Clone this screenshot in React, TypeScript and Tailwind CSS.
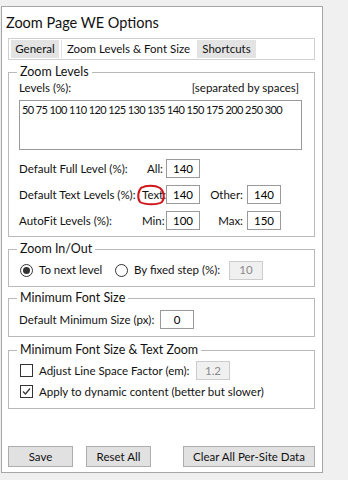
import React from "react";

const font = "font-['Lato','Noto_Sans','DejaVu_Sans',sans-serif]";

function Box({ value, w = "w-[34px]", disabled = false }: { value: string; w?: string; disabled?: boolean }) {
  return (
    <div
      className={`flex h-[19px] ${w} shrink-0 items-center justify-center border ${
        disabled ? "border-[#cccccc] bg-[#f0f0f0] text-[#8a8a8a]" : "border-[#9a9a9a] bg-white text-black"
      }`}
    >
      {value}
    </div>
  );
}

function Group({ title, className, children }: { title: string; className?: string; children: React.ReactNode }) {
  return (
    <fieldset className={`w-[307px] border border-[#b9b9b9] pl-[10px] pr-[11px] ${className ?? ""}`}>
      <legend className="-ml-[2px] px-[3px] text-[12.5px] leading-[14px]">{title}</legend>
      {children}
    </fieldset>
  );
}

function Radio({ checked }: { checked?: boolean }) {
  return (
    <span className="flex h-[13px] w-[13px] shrink-0 items-center justify-center rounded-full border border-[#333333] bg-white">
      {checked && <span className="h-[7px] w-[7px] rounded-full bg-[#333333]" />}
    </span>
  );
}

function Check({ checked }: { checked?: boolean }) {
  return (
    <span className="flex h-[13px] w-[13px] shrink-0 items-center justify-center border border-[#333333] bg-white">
      {checked && (
        <svg width="9" height="9" viewBox="0 0 9 9">
          <path d="M1 4.5 L3.5 7 L8 1.5" fill="none" stroke="#333333" strokeWidth="1.2" />
        </svg>
      )}
    </span>
  );
}

function Row({ label, a, av, b, bv }: { label: React.ReactNode; a: React.ReactNode; av: string; b?: string; bv?: string }) {
  return (
    <div className="flex h-[19px] items-center whitespace-nowrap">
      <span className="w-[123px]">{label}</span>
      <span className="mr-[3px] w-[21px] text-right">{a}</span>
      <Box value={av} />
      {b && (
        <>
          <span className="mr-[4px] w-[43px] text-right">{b}</span>
          <Box value={bv ?? ""} />
        </>
      )}
    </div>
  );
}

export default function App() {
  return (
    <div className={`h-[480px] w-[348px] bg-[#f0f0f0] pl-px pt-[6px] text-[11.5px] text-[#111111] ${font}`}>
      <div className="flex h-[467px] w-[322px] flex-col whitespace-nowrap border border-[#a6a6a6] bg-white px-[6px] pt-[6px]">
        <h1 className="-ml-[2px] text-[14.5px] leading-[20px]">Zoom Page WE Options</h1>

        <div className="mt-[5px] flex h-[22px] w-[307px] items-center gap-[2px] border border-[#d0d0d0] px-[2px]">
          <span className="flex h-[18px] w-[48px] items-center justify-center bg-[#e3e3e3]">General</span>
          <span className="flex h-[18px] w-[134px] items-center justify-center border-l border-[#e3e3e3] bg-white">
            Zoom Levels &amp; Font Size
          </span>
          <span className="flex h-[18px] w-[59px] items-center justify-center bg-[#e3e3e3]">Shortcuts</span>
        </div>

        <Group title="Zoom Levels" className="mt-[5px] pb-[6px]">
          <div className="mt-px flex h-[16px] items-center justify-between pr-[4px]">
            <span>Levels (%):</span>
            <span>[separated by spaces]</span>
          </div>
          <div className="mt-[4px] h-[50px] w-[283px] border border-[#9a9a9a] px-[2px] pt-[2px] text-[11px] leading-[14px] tracking-[-0.6px]">
            50 75 100 110 120 125 130 135 140 150 175 200 250 300
          </div>
          <div className="mt-[9px] flex flex-col gap-[7px]">
            <Row label="Default Full Level (%):" a="All:" av="140" />
            <Row
              label="Default Text Levels (%):"
              a={
                <span className="relative">
                  Text:
                  <svg className="absolute -left-[6px] -top-[4px]" width="32" height="22" viewBox="0 0 32 22">
                    <path
                      d="M6 3 C2 6 1 14 4 18 C9 21 22 21 26 18 C29 14 28 7 24 4 C19 1 10 1 5 4"
                      fill="none"
                      stroke="#d0161b"
                      strokeWidth="2"
                    />
                  </svg>
                </span>
              }
              av="140"
              b="Other:"
              bv="140"
            />
            <Row label="AutoFit Levels (%):" a="Min:" av="100" b="Max:" bv="150" />
          </div>
        </Group>

        <Group title="Zoom In/Out" className="mt-[5px] pb-[6px]">
          <div className="mt-[4px] flex h-[20px] items-center">
            <span className="ml-px mr-[6px]">
              <Radio checked />
            </span>
            <span className="w-[76px]">To next level</span>
            <Radio />
            <span className="ml-[6px] w-[95px]">By fixed step (%):</span>
            <Box value="10" disabled />
          </div>
        </Group>

        <Group title="Minimum Font Size" className="mt-[4px] pb-[7px]">
          <div className="mt-[5px] flex h-[19px] items-center">
            <span className="w-[141px]">Default Minimum Size (px):</span>
            <Box value="0" />
          </div>
        </Group>

        <Group title="Minimum Font Size & Text Zoom" className="mt-[6px] pb-[7px]">
          <div className="mt-[4px] flex flex-col gap-[2px]">
            <div className="flex h-[19px] items-center">
              <span className="ml-px mr-[6px]">
                <Check />
              </span>
              <span className="w-[157px]">Adjust Line Space Factor (em):</span>
              <Box value="1.2" disabled />
            </div>
            <div className="flex h-[19px] items-center">
              <span className="ml-px mr-[6px]">
                <Check checked />
              </span>
              <span>Apply to dynamic content (better but slower)</span>
            </div>
          </div>
        </Group>

        <div className="mt-auto mb-[5px] flex w-[307px] items-center">
          <button className="h-[21px] w-[65px] border border-[#adadad] bg-[#e1e1e1]">Save</button>
          <button className="ml-[13px] h-[21px] w-[65px] border border-[#adadad] bg-[#e1e1e1]">Reset All</button>
          <button className="ml-auto h-[21px] w-[132px] border border-[#adadad] bg-[#e1e1e1]">
            Clear All Per-Site Data
          </button>
        </div>
      </div>
    </div>
  );
}
